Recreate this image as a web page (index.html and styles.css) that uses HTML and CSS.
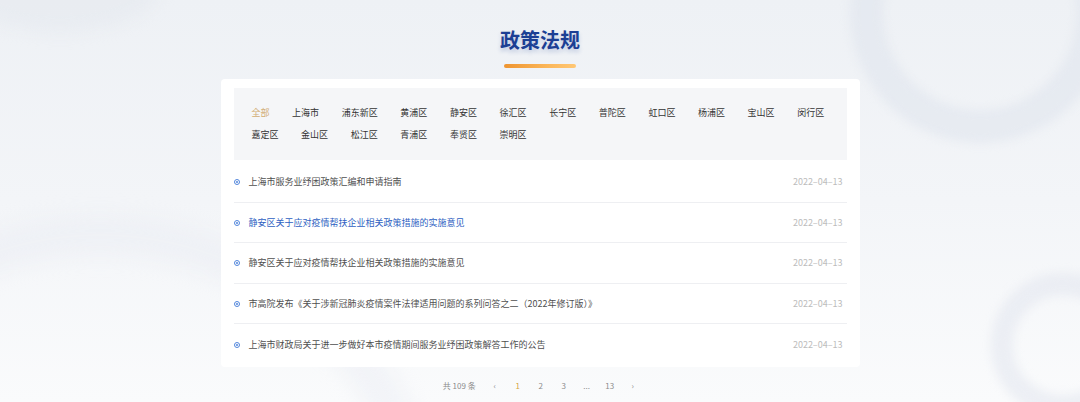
FILE: index.html
```html
<!DOCTYPE html>
<html lang="zh-CN">
<head>
<meta charset="utf-8">
<title>政策法规</title>
<link rel="stylesheet" href="styles.css">
</head>
<body>
<div class="page">
  <div class="deco">
    <div class="ring ring-tr"></div>
    <div class="ring ring-br"></div>
    <div class="ring ring-l"></div>
    <div class="blob-tl"></div>
  </div>
  <div class="content">
    <h1 class="title">政策法规</h1>
    <div class="title-bar"></div>
    <div class="card">
      <div class="filters">
        <span class="filter active">全部</span>
        <span class="filter">上海市</span>
        <span class="filter">浦东新区</span>
        <span class="filter">黄浦区</span>
        <span class="filter">静安区</span>
        <span class="filter">徐汇区</span>
        <span class="filter">长宁区</span>
        <span class="filter">普陀区</span>
        <span class="filter">虹口区</span>
        <span class="filter">杨浦区</span>
        <span class="filter">宝山区</span>
        <span class="filter">闵行区</span>
        <span class="filter">嘉定区</span>
        <span class="filter">金山区</span>
        <span class="filter">松江区</span>
        <span class="filter">青浦区</span>
        <span class="filter">奉贤区</span>
        <span class="filter">崇明区</span>
      </div>
      <ul class="list">
        <li class="item"><span class="dot"></span><span class="item-title">上海市服务业纾困政策汇编和申请指南</span><span class="date">2022–04–13</span></li>
        <li class="item hl"><span class="dot"></span><span class="item-title">静安区关于应对疫情帮扶企业相关政策措施的实施意见</span><span class="date">2022–04–13</span></li>
        <li class="item"><span class="dot"></span><span class="item-title">静安区关于应对疫情帮扶企业相关政策措施的实施意见</span><span class="date">2022–04–13</span></li>
        <li class="item"><span class="dot"></span><span class="item-title">市高院发布《关于涉新冠肺炎疫情案件法律适用问题的系列问答之二（2022年修订版）》</span><span class="date">2022–04–13</span></li>
        <li class="item"><span class="dot"></span><span class="item-title">上海市财政局关于进一步做好本市疫情期间服务业纾困政策解答工作的公告</span><span class="date">2022–04–13</span></li>
      </ul>
    </div>
    <div class="pager">
      <span class="total">共 109 条</span>
      <span class="pg">&#8249;</span>
      <span class="pg current">1</span>
      <span class="pg">2</span>
      <span class="pg">3</span>
      <span class="pg">...</span>
      <span class="pg">13</span>
      <span class="pg">&#8250;</span>
    </div>
  </div>
</div>
</body>
</html>
```

FILE: styles.css
```css
* { box-sizing: border-box; }
html, body { margin: 0; padding: 0; }
body {
  width: 1080px;
  height: 402px;
  overflow: hidden;
  font-family: "Noto Sans CJK SC", "Noto Sans", sans-serif;
  background: linear-gradient(180deg, #eef1f5 0%, #f3f5f8 50%, #fafbfc 100%);
}
.page {
  position: relative;
  width: 1080px;
  height: 402px;
}
.deco {
  position: absolute;
  inset: 0;
  overflow: hidden;
  z-index: 0;
  pointer-events: none;
}
.ring {
  position: absolute;
  border-radius: 50%;
  filter: blur(5px);
}
.ring-tr {
  left: 850px;
  top: -117px;
  width: 260px;
  height: 260px;
  border: 33px solid rgba(222, 227, 237, 0.55);
}
.ring-br {
  left: 991px;
  top: 273px;
  width: 144px;
  height: 144px;
  border: 22px solid rgba(226, 230, 239, 0.55);
}
.ring-l {
  left: -250px;
  top: 215px;
  width: 700px;
  height: 700px;
  border: 40px solid rgba(228, 232, 240, 0.35);
  filter: blur(10px);
}
.blob-tl {
  position: absolute;
  left: -40px;
  top: -60px;
  width: 200px;
  height: 92px;
  border-radius: 50%;
  background: rgba(226, 230, 238, 0.45);
  filter: blur(8px);
}
.content {
  position: relative;
  z-index: 1;
  padding-top: 26px;
}
.title {
  margin: 0;
  text-align: center;
  font-size: 20px;
  line-height: 28px;
  font-weight: 700;
  color: #1c3f94;
  text-shadow: 0 3px 4px rgba(28, 63, 148, 0.22);
}
.title-bar {
  width: 72px;
  height: 4px;
  margin: 10px auto 0;
  border-radius: 2px;
  background: linear-gradient(90deg, #ee9430 0%, #fbb659 60%, #ffc774 100%);
}
.card {
  width: 639px;
  margin: 11px auto 0;
  padding: 9px 13px 2px;
  background: #ffffff;
  border-radius: 4px;
}
.filters {
  display: flex;
  flex-wrap: wrap;
  column-gap: 22.6px;
  padding: 14px 18px;
  background: #f5f6f8;
  font-size: 9px;
  line-height: 22px;
  color: #333333;
}
.filter.active { color: #d2ad74; }
.list {
  list-style: none;
  margin: 2px 0 0;
  padding: 0;
}
.item {
  display: flex;
  align-items: center;
  height: 40.5px;
  padding-right: 4px;
  border-bottom: 1px solid #eeeff2;
  font-size: 9px;
  color: #4f4f4f;
}
.item:last-child { border-bottom: none; }
.dot {
  flex: none;
  width: 6px;
  height: 6px;
  border-radius: 50%;
  border: 1px solid #5286dc;
  position: relative;
  margin-right: 9px;
  margin-top: 1px;
}
.dot::after {
  content: "";
  position: absolute;
  left: 1px;
  top: 1px;
  width: 2px;
  height: 2px;
  border-radius: 50%;
  background: #5286dc;
}
.item-title { flex: 1; }
.item.hl .item-title { color: #2e5fc2; }
.date {
  color: #bcbcbc;
  font-size: 9px;
}
.pager {
  display: flex;
  justify-content: center;
  align-items: center;
  margin-top: 9px;
  padding-left: 7px;
  height: 20px;
  font-size: 8px;
  color: #8c8c8c;
}
.total { margin-right: 7.5px; }
.pg {
  width: 23px;
  text-align: center;
}
.pg.current { color: #d6a545; }
```
